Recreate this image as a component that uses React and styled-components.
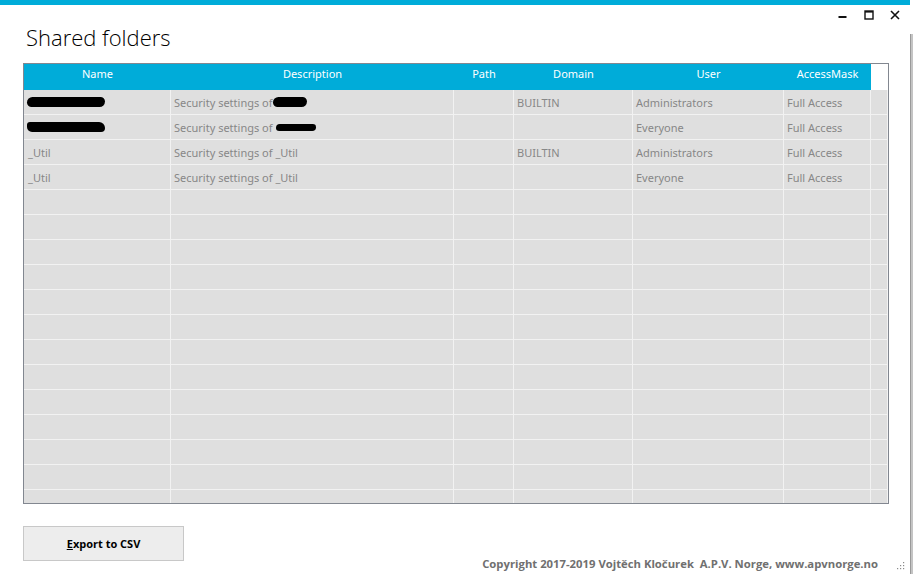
import React from 'react'
import styled, { createGlobalStyle } from 'styled-components'

const GlobalStyle = createGlobalStyle`
    html, body {
        margin: 0;
        padding: 0;
        background: #ffffff;
    }
    body {
        font-family: "Noto Sans", "Open Sans", sans-serif;
    }
`

const COLUMNS = [
    { key: 'name', title: 'Name', width: 147 },
    { key: 'description', title: 'Description', width: 283 },
    { key: 'path', title: 'Path', width: 60 },
    { key: 'domain', title: 'Domain', width: 119 },
    { key: 'user', title: 'User', width: 151 },
    { key: 'mask', title: 'AccessMask', width: 87 },
]

const template = COLUMNS.map(c => `${c.width}px`).join(' ') + ' 17px'

const rows = [
    { name: { redact: 78, shape: 'a' }, description: { text: 'Security settings of', redact: 34, shape: 'b' }, domain: 'BUILTIN', user: 'Administrators', mask: 'Full Access' },
    { name: { redact: 78, shape: 'c' }, description: { text: 'Security settings of', redact: 40, shape: 'd' }, domain: '', user: 'Everyone', mask: 'Full Access' },
    { name: '_Util', description: 'Security settings of _Util', domain: 'BUILTIN', user: 'Administrators', mask: 'Full Access' },
    { name: '_Util', description: 'Security settings of _Util', domain: '', user: 'Everyone', mask: 'Full Access' },
]

const EMPTY_ROWS = 13

const renderValue = value => {
    if (!value) return null
    if (typeof value === 'string') return value
    return (
        <>
            {value.text && <span>{value.text}</span>}
            <Redacted $width={value.redact} $shape={value.shape} />
        </>
    )
}

const App = () => {
    const allRows = [...rows, ...Array.from({ length: EMPTY_ROWS }, () => null)]
    return (
        <Screen>
            <GlobalStyle />
            <Window>
                <TopStripe />
                <Controls>
                    <ControlButton aria-label="Minimize">
                        <svg width="10" height="10" viewBox="0 0 10 10">
                            <rect x="0.5" y="6" width="8" height="2" fill="#111" />
                        </svg>
                    </ControlButton>
                    <ControlButton aria-label="Maximize">
                        <svg width="10" height="10" viewBox="0 0 10 10">
                            <rect x="1" y="1" width="8" height="8" fill="none" stroke="#111" strokeWidth="1.4" />
                            <rect x="1" y="1" width="8" height="1.6" fill="#111" />
                        </svg>
                    </ControlButton>
                    <ControlButton aria-label="Close">
                        <svg width="10" height="10" viewBox="0 0 10 10">
                            <path d="M1 1 L9 9 M9 1 L1 9" stroke="#111" strokeWidth="1.6" />
                        </svg>
                    </ControlButton>
                </Controls>
                <Title>Shared folders</Title>
                <Grid>
                    <HeaderRow>
                        {COLUMNS.map(c => (
                            <HeaderCell key={c.key}>{c.title}</HeaderCell>
                        ))}
                        <HeaderFiller />
                    </HeaderRow>
                    <Body>
                        {allRows.map((row, i) => (
                            <Row key={i}>
                                {COLUMNS.map(c => (
                                    <Cell key={c.key}>{row ? renderValue(row[c.key]) : null}</Cell>
                                ))}
                                <Cell />
                            </Row>
                        ))}
                    </Body>
                </Grid>
                <Footer>
                    <ExportButton>
                        <u>E</u>xport to CSV
                    </ExportButton>
                    <Copyright>Copyright 2017-2019 Vojtěch Kločurek  A.P.V. Norge, www.apvnorge.no</Copyright>
                    <Grip>
                        <svg width="10" height="10" viewBox="0 0 10 10">
                            <rect x="8" y="2" width="1.2" height="1.2" fill="#8a8a8a" />
                            <rect x="5" y="5" width="1.2" height="1.2" fill="#8a8a8a" />
                            <rect x="8" y="5" width="1.2" height="1.2" fill="#8a8a8a" />
                            <rect x="2" y="8" width="1.2" height="1.2" fill="#8a8a8a" />
                            <rect x="5" y="8" width="1.2" height="1.2" fill="#8a8a8a" />
                            <rect x="8" y="8" width="1.2" height="1.2" fill="#8a8a8a" />
                        </svg>
                    </Grip>
                </Footer>
            </Window>
            <EdgeStrip />
        </Screen>
    )
}

export default App

const Screen = styled.div`
    display: flex;
    width: 913px;
    height: 574px;
    overflow: hidden;
    background: #ffffff;
`

const Window = styled.div`
    flex: 1;
    display: flex;
    flex-direction: column;
    min-width: 0;
`

const EdgeStrip = styled.div`
    width: 2px;
    margin-top: 34px;
    background: #c4c4c4;
    border-left: 1px solid #9a9a9a;
`

const TopStripe = styled.div`
    height: 5px;
    background: #00acd9;
`

const Controls = styled.div`
    display: flex;
    justify-content: flex-end;
    align-items: center;
    height: 20px;
    padding-right: 10px;
    gap: 16px;
`

const ControlButton = styled.div`
    display: flex;
    width: 10px;
    height: 10px;
`

const Title = styled.h1`
    margin: 0;
    padding-left: 26px;
    height: 38px;
    font-family: "Open Sans", "Noto Sans", sans-serif;
    font-weight: 300;
    font-size: 22px;
    line-height: 24px;
    color: #000;
`

const Grid = styled.div`
    margin-left: 23px;
    width: 864px;
    height: 439px;
    border: 1px solid #828790;
    display: flex;
    flex-direction: column;
    overflow: hidden;
`

const HeaderRow = styled.div`
    display: grid;
    grid-template-columns: ${template};
    height: 26px;
    flex-shrink: 0;
`

const HeaderCell = styled.div`
    background: #00acd9;
    color: #ffffff;
    font-size: 11px;
    line-height: 16px;
    padding-top: 2px;
    text-align: center;
    white-space: nowrap;
`

const HeaderFiller = styled.div`
    background: #ffffff;
`

const Body = styled.div`
    flex: 1;
    background: #dfdfdf;
    overflow: hidden;
`

const Row = styled.div`
    display: grid;
    grid-template-columns: ${template};
    height: 25px;
    box-sizing: border-box;
    border-bottom: 1px solid #f2f2f2;
`

const Cell = styled.div`
    display: flex;
    align-items: center;
    box-sizing: border-box;
    border-right: 1px solid #f2f2f2;
    padding-left: 3px;
    font-size: 11px;
    color: #878787;
    white-space: nowrap;
    overflow: hidden;

    &:first-child {
        padding-left: 4px;
    }
`

const Redacted = styled.span`
    display: inline-block;
    width: ${({ $width }) => $width}px;
    height: ${({ $shape }) => ($shape === 'd' ? 7 : 10)}px;
    margin-left: ${({ $shape }) => ($shape === 'b' ? 0 : $shape === 'd' ? 3 : -1)}px;
    background: #000;
    border-radius: ${({ $shape }) => ($shape === 'c' ? '3px 6px 4px 5px' : '6px 5px 6px 5px')};
`

const Footer = styled.div`
    flex: 1;
    display: flex;
    align-items: flex-end;
    padding-left: 23px;
`

const ExportButton = styled.button`
    width: 161px;
    height: 35px;
    margin-bottom: 13px;
    background: #ededed;
    border: 1px solid #c8c8c8;
    font-family: "Open Sans", "Noto Sans", sans-serif;
    font-weight: 700;
    font-size: 11px;
    color: #000;
    padding: 0;
    cursor: default;
`

const Copyright = styled.div`
    margin-left: auto;
    margin-bottom: 3px;
    white-space: pre;
    font-family: "Open Sans", "Noto Sans", sans-serif;
    font-weight: 700;
    font-size: 11.3px;
    color: #707070;
`

const Grip = styled.div`
    width: 10px;
    height: 10px;
    margin: 0 5px 4px 17px;
    display: flex;
`
